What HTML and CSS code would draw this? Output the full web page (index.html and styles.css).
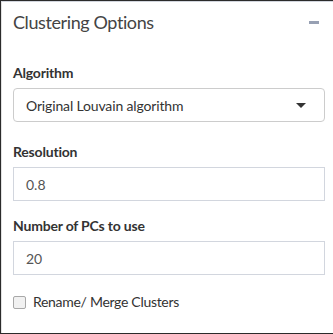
FILE: index.html
```html
<!DOCTYPE html>
<html>
<head>
<meta charset="utf-8">
<link rel="stylesheet" href="styles.css">
</head>
<body>
<div class="frame">
  <div class="box">
    <div class="box-header">
      <h3 class="box-title">Clustering Options</h3>
      <span class="minus"></span>
    </div>
    <div class="box-body">
      <div class="form-group first">
        <div class="label">Algorithm</div>
        <div class="select">
          <span>Original Louvain algorithm</span>
          <span class="caret"></span>
        </div>
      </div>
      <div class="form-group">
        <div class="label">Resolution</div>
        <div class="input">0.8</div>
      </div>
      <div class="form-group">
        <div class="label">Number of PCs to use</div>
        <div class="input">20</div>
      </div>
      <div class="checkbox">
        <span class="check"></span>
        <span class="check-label">Rename/ Merge Clusters</span>
      </div>
    </div>
  </div>
</div>
</body>
</html>
```

FILE: styles.css
```css
html, body {
  margin: 0;
  padding: 0;
  background: #fff;
  overflow: hidden;
}
.frame {
  box-sizing: border-box;
  width: 333px;
  height: 334px;
  border-top: 1px solid #2b2b2b;
  border-left: 1px solid #2b2b2b;
  border-bottom: 1px solid #2b2b2b;
  font-family: "Lato", sans-serif;
}
.box {
  box-sizing: border-box;
  height: 100%;
  border-top: 1px solid #d2d6de;
  border-left: 1px solid #e2e2e2;
}
.box-header {
  display: flex;
  justify-content: space-between;
  align-items: center;
  padding: 10px 14px 0 11px;
  height: 20px;
}
.box-title {
  margin: 0;
  font-size: 18px;
  line-height: 20px;
  font-weight: 400;
  color: #444;
  letter-spacing: -0.4px;
}
.minus {
  width: 10px;
  height: 3px;
  background: #97a0b3;
}
.box-body {
  padding: 31px 8px 0 11px;
}
.form-group {
  margin-bottom: 15px;
}
.form-group.first {
  margin-bottom: 20px;
}
.label {
  font-size: 14px;
  line-height: 20px;
  font-weight: 700;
  color: #333;
  margin-bottom: 5px;
  letter-spacing: -0.2px;
}
.select {
  box-sizing: border-box;
  height: 34px;
  border: 1px solid #ccc;
  border-radius: 4px;
  display: flex;
  align-items: center;
  justify-content: space-between;
  padding: 0 18px 0 12px;
  font-size: 14px;
  color: #333;
  letter-spacing: -0.15px;
}
.caret {
  width: 0;
  height: 0;
  border-left: 5px solid transparent;
  border-right: 5px solid transparent;
  border-top: 5px solid #333;
}
.input {
  box-sizing: border-box;
  height: 34px;
  border: 1px solid #d2d6de;
  padding: 0 12px;
  display: flex;
  align-items: center;
  font-size: 14px;
  color: #555;
}
.checkbox {
  display: flex;
  align-items: center;
  margin-top: 17px;
}
.check {
  box-sizing: border-box;
  width: 13px;
  height: 13px;
  border: 1px solid #a8a8a8;
  border-radius: 2px;
  background: #f1f1f1;
}
.check-label {
  margin-left: 7px;
  font-size: 14px;
  line-height: 20px;
  color: #333;
  letter-spacing: -0.3px;
}
```
